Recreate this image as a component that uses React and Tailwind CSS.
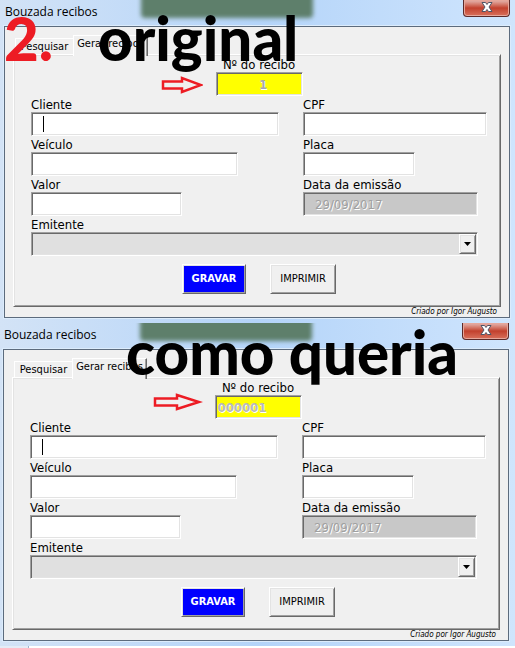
import clsx from 'clsx';

// Classic 3D edges: sunken for boxes, raised for buttons and the tab page
const SUNKEN =
  'border border-t-[#a0a0a0] border-l-[#a0a0a0] border-r-white border-b-white shadow-[inset_1px_1px_#696969,inset_-1px_-1px_#e3e3e3]';
const RAISED =
  'border border-t-white border-l-white border-r-[#696969] border-b-[#696969] shadow-[inset_1px_1px_#e3e3e3,inset_-1px_-1px_#a0a0a0]';

const LABEL = 'block h-4 text-[13px] leading-[18px]';
const CAPTION = "absolute font-['Lato',sans-serif] text-[60px] leading-[72px] font-black whitespace-nowrap";

/**
 * Red block arrow pointing at the receipt number
 */
function Arrow({ className, long }) {
  return (
    <svg className={className} width={long ? 50 : 42} height="18" viewBox={long ? '0 0 50 18' : '0 0 42 18'} aria-hidden="true">
      <path
        d={long ? 'M2 5.5H24V2L46 9L24 16V12.5H2Z' : 'M2 5.5H21V2L40 9L21 16V12.5H2Z'}
        fill="none"
        stroke="#ed1c24"
        strokeWidth="2.5"
      />
    </svg>
  );
}

/**
 * Labelled text box
 */
function Field({ id, label, className, caret, background = 'bg-white', ...props }) {
  return (
    <div className="relative flex flex-col">
      <label htmlFor={id} className={LABEL}>{label}</label>
      <input id={id} className={clsx('h-6 text-[13px] outline-none', SUNKEN, background, className)} {...props} />
      {caret && <span className="absolute bottom-1 left-3 h-4 w-px bg-black" />}
    </div>
  );
}

function TitleBar() {
  return (
    <header className="relative flex h-[26px] items-start justify-between overflow-hidden">
      <div className="absolute -top-3 left-[27%] h-[30px] w-[34%] rounded bg-[#5e7f6b] blur-[2px]" />
      <h2 className="relative pl-px font-['Open_Sans',sans-serif] text-xs leading-6">Bouzada recibos</h2>
      <button
        type="button"
        aria-label="Fechar"
        className="relative flex h-[17px] w-[47px] items-center justify-center rounded-b border border-t-0 border-[#5b2a2a] bg-linear-to-b from-[#dfa299] from-10% via-[#c2402d] via-50% to-[#d8705c] pb-0.5 shadow-[inset_0_0_0_1px_#e6a79b]"
      >
        <svg width="12" height="10" viewBox="0 0 12 10" aria-hidden="true">
          <path d="M1 .5H4.5L6 2.5L7.5 .5H11L8 5L11 9.5H7.5L6 7.5L4.5 9.5H1L4 5Z" fill="#fff" stroke="#4f5566" strokeWidth="1" />
        </svg>
      </button>
    </header>
  );
}

function ReceiptWindow({ name, number, numberClass, className, arrow }) {
  return (
    <section className={clsx('bg-linear-to-r from-[#d3e3f6] via-[#b4d4f9] to-[#cfe5fd] pb-[5px]', className)}>
      <TitleBar />
      <div className="border border-[#5c6b7d] bg-[#f0f0f0] px-2 pt-2 shadow-[0_0_0_1px_#dcecfc]">
        <div role="tablist" className="flex h-[19px] items-end pl-0.5 text-[11px]">
          <button type="button" role="tab" className="h-4 w-[58px] border-t border-l border-white text-center leading-4">
            Pesquisar
          </button>
          <button
            type="button"
            role="tab"
            aria-selected="true"
            className="relative -mb-0.5 h-[21px] w-[75px] border-t border-r border-l border-t-white border-r-[#696969] border-l-white bg-[#f0f0f0] pb-1 text-center leading-4 whitespace-nowrap shadow-[inset_-1px_0_#a0a0a0]"
          >
            Gerar recibos
          </button>
        </div>

        <form className={clsx('pt-px pr-[13px] pb-3 pl-[17px]', RAISED)}>
          <div className="relative flex flex-col items-center">
            <label htmlFor={`${name}-numero`} className={LABEL}>Nº do recibo</label>
            <input
              id={`${name}-numero`}
              readOnly
              value={number}
              className={clsx(
                'h-6 w-[87px] bg-[#ffff00] text-[13px] font-bold outline-none [text-shadow:1px_1px_#fff]',
                SUNKEN,
                numberClass,
              )}
            />
            {arrow}
          </div>

          <div className="grid grid-cols-[31fr_23fr] gap-x-6">
            <Field id={`${name}-cliente`} label="Cliente" className="pl-2" caret />
            <Field id={`${name}-cpf`} label="CPF" />
            <Field id={`${name}-veiculo`} label="Veículo" className="w-5/6" />
            <Field id={`${name}-placa`} label="Placa" className="w-[61%]" />
            <Field id={`${name}-valor`} label="Valor" className="w-[61%]" />
            <Field
              id={`${name}-data`}
              label="Data da emissão"
              readOnly
              value="29/09/2017"
              background="bg-[#c8c8c8]"
              className="w-[95%] pl-[11px] text-[#a0a0a0] [text-shadow:1px_1px_#fff]"
            />
          </div>

          <label htmlFor={`${name}-emitente`} className={LABEL}>Emitente</label>
          <div className="relative w-[98%]">
            <select id={`${name}-emitente`} className={clsx('block h-6 w-full appearance-none bg-[#e0e0e0] outline-none', SUNKEN)} />
            <span className={clsx('pointer-events-none absolute top-0.5 right-0.5 flex h-5 w-[17px] items-center justify-center bg-[#f0f0f0]', RAISED)}>
              <svg width="7" height="4" viewBox="0 0 7 4" aria-hidden="true"><path d="M0 0H7L3.5 4Z" /></svg>
            </span>
          </div>

          <div className="mt-2 flex justify-center gap-6">
            <button type="button" className={clsx('h-[30px] w-16 bg-[#0000ff] text-[11px] font-bold text-white', RAISED)}>
              GRAVAR
            </button>
            <button type="button" className={clsx('h-[30px] w-[66px] text-[11px]', RAISED)}>
              IMPRIMIR
            </button>
          </div>
        </form>
        <p className="h-2.5 pr-1 text-right text-[8px] leading-[10px] italic">Criado por Igor Augusto</p>
      </div>
    </section>
  );
}

export default function App() {
  return (
    <main className="relative overflow-hidden bg-white font-['DejaVu_Sans_Condensed','DejaVu_Sans',sans-serif] text-black">
      <ReceiptWindow
        name="original"
        number="1"
        numberClass="pl-2 text-center text-[#a8a8a8]"
        className="pr-[5px] pl-1"
        arrow={<Arrow className="absolute top-5 left-[130px]" />}
      />
      <ReceiptWindow
        name="queria"
        number="000001"
        numberClass="pl-0.5 text-[#b8b8b8]"
        className="pr-1.5 pl-[3px]"
        arrow={<Arrow long className="absolute top-3.5 left-[123px]" />}
      />
      <div className="h-0.5 w-[29px] border-r border-[#9eb6ce] bg-[#e4ecf7]" />

      {/* Captions written over the two windows */}
      <p className={clsx(CAPTION, 'top-0.5 left-1 text-[#ed1c24]')}>2.</p>
      <p className={clsx(CAPTION, 'top-0.5 left-[98px]')}>original</p>
      <p className={clsx(CAPTION, 'top-[316px] left-[126px]')}>como queria</p>
    </main>
  );
}
